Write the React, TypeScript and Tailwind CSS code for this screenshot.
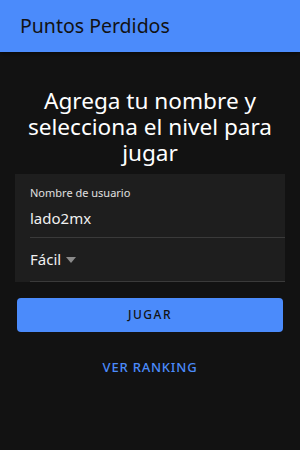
export default function App() {
  return (
    <div
      className="min-h-[450px] w-full bg-[#121212] text-white"
      style={{ fontFamily: '"Noto Sans", "Open Sans", sans-serif' }}
    >
      <header className="flex h-[52px] items-center bg-[#4b8bfb] pl-[20px] shadow-[0_2px_4px_rgba(0,0,0,0.5)]">
        <span className="text-[19.5px] text-[#121212]">Puntos Perdidos</span>
      </header>
      <h1 className="mt-[36px] px-3 text-center text-[22.6px] leading-[26px] text-white">
        Agrega tu nombre y selecciona el nivel para jugar
      </h1>
      <div className="mx-[15px] mt-[8px] bg-[#1e1e1e]">
        <div className="ml-[15px] flex h-[64px] flex-col justify-center border-b border-[#3a3a3a] pt-[2px]">
          <span className="text-[11px] leading-[14px] text-[#e0e0e0]">Nombre de usuario</span>
          <span className="mt-[9px] text-[15px] leading-[18px] text-[#f0f0f0]">lado2mx</span>
        </div>
        <div className="ml-[15px] flex h-[44px] items-center border-b border-[#3a3a3a]">
          <span className="text-[15px] text-[#f0f0f0]">Fácil</span>
          <svg width="10" height="6" viewBox="0 0 10 6" className="ml-[5px] mt-[1px]">
            <path d="M0 0h10L5 6z" fill="#8a8a8a" />
          </svg>
        </div>
      </div>
      <button className="mx-[17px] mt-[16px] flex h-[34px] w-[266px] items-center justify-center rounded-[4px] bg-[#4b8bfb] text-[12px] font-medium tracking-[1.5px] text-[#121212]">
        JUGAR
      </button>
      <div className="mt-[26px] text-center text-[13px] font-medium tracking-[0.8px] text-[#4b8bfb]">
        VER RANKING
      </div>
    </div>
  );
}
